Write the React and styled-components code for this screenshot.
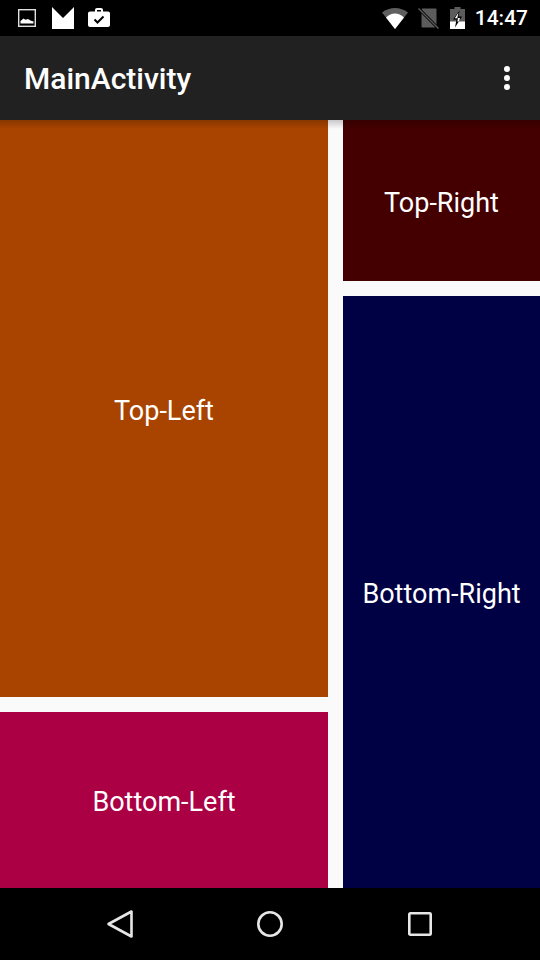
import React from "react";
import styled, { createGlobalStyle } from "styled-components";

const Global = createGlobalStyle`
  html, body { margin: 0; padding: 0; background: #000; }
  * { box-sizing: border-box; }
`;

const Screen = styled.div`
  width: 540px;
  height: 960px;
  display: flex;
  flex-direction: column;
  font-family: Roboto, "Liberation Sans", sans-serif;
  color: #fff;
  overflow: hidden;
  background: #000;
`;

const StatusBar = styled.div`
  height: 36px;
  flex: none;
  background: #000;
  display: flex;
  align-items: center;
  justify-content: space-between;
  padding: 0 12px 0 18px;
`;

const StatusGroup = styled.div`
  display: flex;
  align-items: center;
`;

const Time = styled.span`
  font-size: 21px;
  font-weight: 500;
  line-height: 36px;
  color: #fff;
  margin-left: 10px;
`;

const AppBar = styled.div`
  height: 84px;
  flex: none;
  background: #212121;
  display: flex;
  align-items: center;
  justify-content: space-between;
  padding: 0 30px 0 24px;
`;

const Title = styled.h1`
  margin: 2px 0 0;
  font-size: 30px;
  font-weight: 500;
  line-height: 82px;
  color: #fff;
`;

const Content = styled.div`
  position: relative;
  height: 768px;
  flex: none;
  background: #fafafa;
  display: grid;
  grid-template-columns: 328px 197px;
  column-gap: 15px;

  &::after {
    content: "";
    position: absolute;
    top: 0;
    left: 0;
    right: 0;
    height: 9px;
    background: linear-gradient(rgba(0, 0, 0, 0.2), rgba(0, 0, 0, 0));
  }
`;

const Column = styled.div`
  display: grid;
  row-gap: 15px;
  grid-template-rows: ${(p) => p.$rows};
  min-height: 0;
`;

const Tile = styled.div`
  background: ${(p) => p.$bg};
  display: flex;
  align-items: center;
  justify-content: center;
  padding-top: 4px;
  font-size: 27px;
  color: #fff;
`;

const NavBar = styled.div`
  height: 72px;
  flex: none;
  background: #000;
  display: grid;
  grid-template-columns: repeat(3, 150px);
  justify-content: center;
  align-items: center;
`;

const NavSlot = styled.div`
  display: flex;
  justify-content: center;
  align-items: center;
`;

const Svg = styled.svg`
  display: block;
  flex: none;
  margin-left: ${(p) => p.$ml || 0}px;
`;

export default function App() {
  return (
    <Screen>
      <Global />
      <StatusBar>
        <StatusGroup>
          <Svg width="18" height="18" viewBox="0 0 18 18">
            <rect x="0.700" y="0.700" width="16.600" height="16.600" fill="none" stroke="#e0e0e0" strokeWidth="1.400" />
            <path d="M2.500 14.500V12L5.500 9.500L7.500 10.800L10 10L12.500 11.500L15.500 12.500V14.500Z" fill="#fff" />
          </Svg>
          <Svg $ml="16" width="22" height="22" viewBox="0 0 22 22">
            <path d="M0 0L11 11L22 0V22H0Z" fill="#fff" />
          </Svg>
          <Svg $ml="14" width="22" height="20" viewBox="0 0 22 20">
            <path d="M7 3.500V2C7 .900 7.900 0 9 0H13C14.100 0 15 .900 15 2V3.500H20C21.100 3.500 22 4.400 22 5.500V17C22 18.100 21.100 19 20 19H2C.900 19 0 18.100 0 17V5.500C0 4.400 .900 3.500 2 3.500ZM9 3.500H13V2H9Z" fill="#fff" fillRule="evenodd" />
            <path d="M6.500 11.500L9.500 14.500L15.500 8.500" fill="none" stroke="#000" strokeWidth="2" />
          </Svg>
        </StatusGroup>
        <StatusGroup>
          <Svg width="26" height="21" viewBox="0 0 26 21">
            <path d="M0 4.500C7.500 -1.500 18.500 -1.500 26 4.500L13 21Z" fill="#5f5f5f" />
            <path d="M4 9.500C9.500 4 16.500 4 22 9.500L13 21Z" fill="#fff" />
          </Svg>
          <Svg $ml="10" width="21" height="21" viewBox="0 0 21 21">
            <path d="M3.500 1.500C3.500 1 4 .500 4.500 .500H17.500C18 .500 18.500 1 18.500 1.500V18.500C18.500 19 18 19.500 17.500 19.500H4.500C4 19.500 3.500 19 3.500 18.500Z" fill="#5c5c5c" />
            <path d="M1 1L21 21" stroke="#000" strokeWidth="3" />
            <path d="M0.500 0.500L20.500 20.500" stroke="#5c5c5c" strokeWidth="1.200" />
          </Svg>
          <Svg $ml="11" width="15" height="22" viewBox="0 0 15 22">
            <path d="M4.500 0H10.500V2H15V22H0V2H4.500Z" fill="#5c5c5c" />
            <path d="M0 14.500H15V22H0Z" fill="#fff" />
            <path d="M9.500 3.500L3 12.500H6.500L5 20.500L12 9.500H8.500Z" fill="#000" />
            <path d="M8.500 5.500L4.800 11.200H8L7.300 14.500H9L10 11H7.300Z" fill="#fff" />
          </Svg>
          <Time>14:47</Time>
        </StatusGroup>
      </StatusBar>
      <AppBar>
        <Title>MainActivity</Title>
        <Svg width="6" height="24" viewBox="0 0 6 24">
          <circle cx="3" cy="3" r="3" fill="#fff" />
          <circle cx="3" cy="12" r="3" fill="#fff" />
          <circle cx="3" cy="21" r="3" fill="#fff" />
        </Svg>
      </AppBar>
      <Content>
        <Column $rows="577px 176px">
          <Tile $bg="#a94400">Top-Left</Tile>
          <Tile $bg="#ab0044">Bottom-Left</Tile>
        </Column>
        <Column $rows="161px 592px">
          <Tile $bg="#440000">Top-Right</Tile>
          <Tile $bg="#000044">Bottom-Right</Tile>
        </Column>
      </Content>
      <NavBar>
        <NavSlot>
          <Svg width="26" height="28" viewBox="0 0 26 28">
            <path d="M24.500 1.500V26.500L1.500 14Z" fill="none" stroke="#e6e6e6" strokeWidth="2.600" strokeLinejoin="round" />
          </Svg>
        </NavSlot>
        <NavSlot>
          <Svg width="26" height="26" viewBox="0 0 26 26">
            <circle cx="13" cy="13" r="11.700" fill="none" stroke="#e6e6e6" strokeWidth="2.600" />
          </Svg>
        </NavSlot>
        <NavSlot>
          <Svg width="24" height="24" viewBox="0 0 24 24">
            <rect x="1.300" y="1.300" width="21.400" height="21.400" rx="1" fill="none" stroke="#e6e6e6" strokeWidth="2.600" />
          </Svg>
        </NavSlot>
      </NavBar>
    </Screen>
  );
}
